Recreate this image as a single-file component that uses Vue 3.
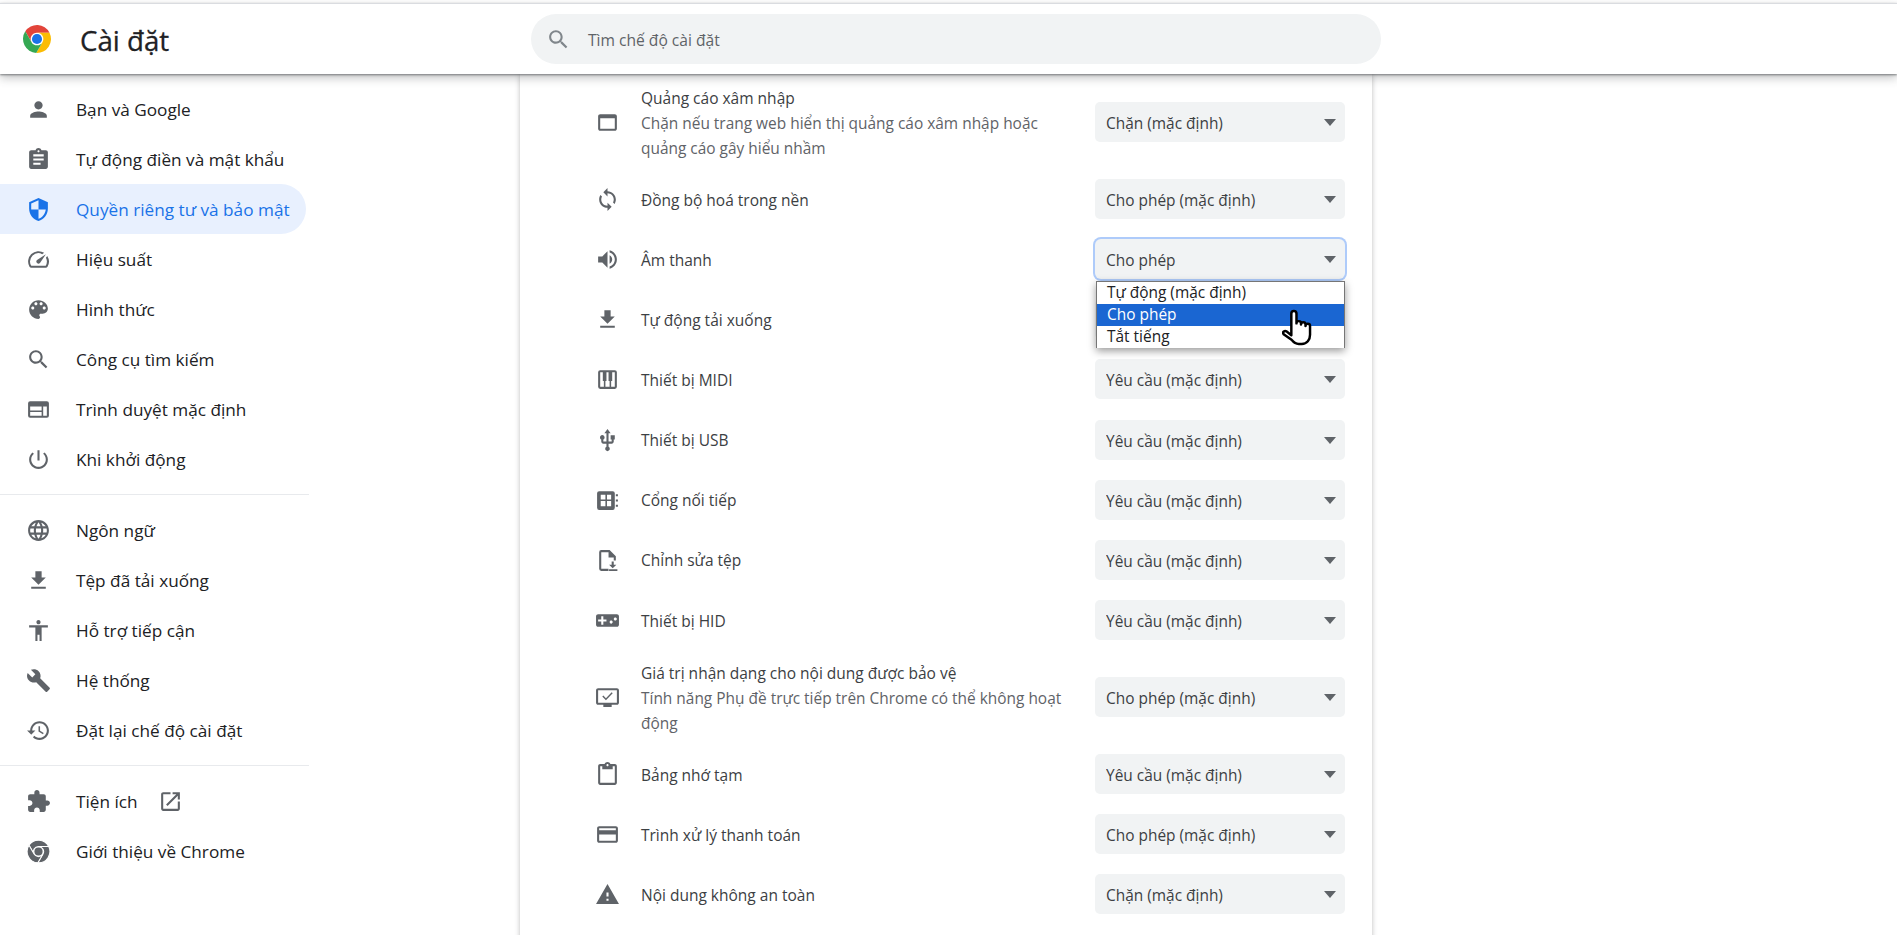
<template>
  <div class="page">
    <header class="topbar">
      <div class="brand">
        <svg class="logo" viewBox="2 2 20 20">
          <path v-for="w in chromeWedges" :key="w.d" :d="w.d" :fill="w.color" />
          <circle cx="12" cy="12" r="3.6" fill="#1a73e8" />
        </svg>
        <h1 class="title">Cài đặt</h1>
      </div>
      <div class="search">
        <svg class="search-icon" viewBox="0 0 24 24"><path :d="icons.search" /></svg>
        <span class="search-text">Tìm chế độ cài đặt</span>
      </div>
    </header>

    <div class="body">
      <nav class="sidebar">
        <template v-for="(group, i) in nav" :key="i">
          <div v-if="i > 0" class="divider"></div>
          <a
            v-for="item in group"
            :key="item.label"
            class="nav-item"
            :class="{ active: item.active }"
          >
            <svg v-if="item.icon === 'chrome'" class="nav-icon mono" viewBox="1 1 22 22">
              <path v-for="w in chromeWedges" :key="w.d" :d="w.d" />
              <circle cx="12" cy="12" r="3.6" />
            </svg>
            <svg v-else class="nav-icon" viewBox="0 0 24 24"><path :d="icons[item.icon]" /></svg>
            <span>{{ item.label }}</span>
            <svg v-if="item.external" class="ext-icon" viewBox="0 0 24 24"><path :d="icons.open" /></svg>
          </a>
        </template>
      </nav>

      <main class="card">
        <div v-for="(row, i) in rows" :key="i" class="row" :class="{ tall: row.desc }">
          <svg v-if="row.icon" class="row-icon" viewBox="0 0 24 24"><path :d="icons[row.icon]" fill-rule="evenodd" /></svg>
          <div class="row-text">
            <div class="row-label">{{ row.label }}</div>
            <div v-if="row.desc" class="row-desc">{{ row.desc }}</div>
          </div>
          <div class="select-wrap">
            <select class="select" :class="{ focused: row.open }" :value="row.value">
              <option>{{ row.value }}</option>
            </select>
            <i class="arrow"></i>
            <div v-if="row.open" class="popup">
              <div v-for="opt in soundOptions" :key="opt" class="popup-item" :class="{ picked: opt === row.value }">{{ opt }}</div>
              <svg class="hand" viewBox="0 0 30 36">
                <path d="M9 21V4.5a2.5 2.5 0 0 1 5 0V14a2.2 2.2 0 0 1 4.4 0v1a2.2 2.2 0 0 1 4.4 0v1.5a2.2 2.2 0 0 1 4.4 0V25c0 5-3 9-8 9h-3c-3 0-5-1.5-7-4L1.500 24.500c-1.500-2 1-4 3-2.500l4.500 3.500z" />
              </svg>
            </div>
          </div>
        </div>
      </main>
    </div>
  </div>
</template>

<script setup>
const icons = {
  search: "M15.5 14h-.79l-.28-.27C15.41 12.59 16 11.11 16 9.5 16 5.91 13.09 3 9.5 3S3 5.91 3 9.5 5.91 16 9.5 16c1.61 0 3.09-.59 4.23-1.57l.27.28v.79l5 4.99L20.49 19l-4.99-5zm-6 0C7.01 14 5 11.99 5 9.5S7.01 5 9.5 5 14 7.01 14 9.5 11.99 14 9.5 14z",
  person: "M12 12c2.21 0 4-1.79 4-4s-1.79-4-4-4-4 1.79-4 4 1.79 4 4 4zm0 2c-2.67 0-8 1.34-8 4v2h16v-2c0-2.66-5.33-4-8-4z",
  assignment: "M19 3h-4.18C14.4 1.84 13.3 1 12 1c-1.3 0-2.4.84-2.82 2H5c-1.1 0-2 .9-2 2v14c0 1.1.9 2 2 2h14c1.1 0 2-.9 2-2V5c0-1.1-.9-2-2-2zm-7 0c.55 0 1 .45 1 1s-.45 1-1 1-1-.45-1-1 .45-1 1-1zm2 14H7v-2h7v2zm3-4H7v-2h10v2zm0-4H7V7h10v2z",
  shield: "M12 1L3 5v6c0 5.55 3.84 10.74 9 12 5.16-1.26 9-6.45 9-12V5l-9-4zm0 10.99h7c-.53 4.12-3.28 7.79-7 8.94V12H5V6.3l7-3.11v8.8z",
  speed: "M20.38 8.57l-1.23 1.85a8 8 0 0 1-.22 7.58H5.07A8 8 0 0 1 15.58 6.85l1.85-1.23A10 10 0 0 0 3.35 19a2 2 0 0 0 1.72 1h13.85a2 2 0 0 0 1.74-1 10 10 0 0 0-.27-10.44zm-9.79 6.84a2 2 0 0 0 2.83 0l5.66-8.49-8.49 5.66a2 2 0 0 0 0 2.83z",
  palette: "M12 3c-4.97 0-9 4.03-9 9s4.03 9 9 9c.83 0 1.5-.67 1.5-1.5 0-.39-.15-.74-.39-1.01-.23-.26-.38-.61-.38-.99 0-.83.67-1.5 1.5-1.5H16c2.76 0 5-2.24 5-5 0-4.42-4.03-8-9-8zm-5.5 9c-.83 0-1.5-.67-1.5-1.5S5.67 9 6.5 9 8 9.67 8 10.5 7.33 12 6.5 12zm3-4C8.67 8 8 7.33 8 6.5S8.67 5 9.5 5s1.5.67 1.5 1.5S10.33 8 9.5 8zm5 0c-.83 0-1.5-.67-1.5-1.5S13.67 5 14.5 5s1.5.67 1.5 1.5S15.33 8 14.5 8zm3 4c-.83 0-1.5-.67-1.5-1.5S16.67 9 17.5 9s1.5.67 1.5 1.5-.67 1.5-1.5 1.5z",
  web: "M20 4H4a2 2 0 0 0-2 2v12a2 2 0 0 0 2 2h16a2 2 0 0 0 2-2V6a2 2 0 0 0-2-2zM4 9h11v4H4zm0 5.5h11V18H4zM16.5 9H20v9h-3.5z",
  power: "M13 3h-2v10h2V3zm4.83 2.17l-1.42 1.42C17.99 7.86 19 9.81 19 12c0 3.87-3.13 7-7 7s-7-3.13-7-7c0-2.19 1.01-4.14 2.58-5.42L6.17 5.17C4.23 6.82 3 9.26 3 12c0 4.97 4.03 9 9 9s9-4.03 9-9c0-2.74-1.23-5.18-3.17-6.83z",
  language: "M11.99 2C6.47 2 2 6.48 2 12s4.47 10 9.99 10C17.52 22 22 17.52 22 12S17.52 2 11.99 2zm6.93 6h-2.95c-.32-1.25-.78-2.45-1.38-3.56 1.84.63 3.37 1.91 4.33 3.56zM12 4.04c.83 1.2 1.48 2.53 1.91 3.96h-3.82c.43-1.43 1.08-2.76 1.91-3.96zM4.26 14C4.1 13.36 4 12.69 4 12s.1-1.36.26-2h3.38c-.08.66-.14 1.32-.14 2 0 .68.06 1.34.14 2H4.26zm.82 2h2.95c.32 1.25.78 2.45 1.38 3.56-1.84-.63-3.37-1.9-4.33-3.56zm2.95-8H5.08c.96-1.66 2.49-2.93 4.33-3.56C8.81 5.55 8.35 6.75 8.03 8zM12 19.96c-.83-1.2-1.48-2.53-1.91-3.96h3.82c-.43 1.43-1.08 2.76-1.91 3.96zM14.34 14H9.66c-.09-.66-.16-1.32-.16-2 0-.68.07-1.35.16-2h4.68c.09.65.16 1.32.16 2 0 .68-.07 1.34-.16 2zm.25 5.56c.6-1.11 1.06-2.31 1.38-3.56h2.95c-.96 1.65-2.49 2.93-4.33 3.56zM16.36 14c.08-.66.14-1.32.14-2 0-.68-.06-1.34-.14-2h3.38c.16.64.26 1.31.26 2s-.1 1.36-.26 2h-3.38z",
  download: "M19 9h-4V3H9v6H5l7 7 7-7zM5 18v2h14v-2H5z",
  accessibility: "M12 2c1.1 0 2 .9 2 2s-.9 2-2 2-2-.9-2-2 .9-2 2-2zm9 7h-6v13h-2v-6h-2v6H9V9H3V7h18v2z",
  build: "M22.7 19l-9.1-9.1c.9-2.3.4-5-1.5-6.9-2-2-5-2.4-7.4-1.3L9 6 6 9 1.6 4.7C.4 7.1.9 10.1 2.9 12.1c1.9 1.9 4.6 2.4 6.9 1.5l9.1 9.1c.4.4 1 .4 1.4 0l2.3-2.3c.5-.4.5-1.1.1-1.4z",
  restore: "M13 3c-4.97 0-9 4.03-9 9H1l3.89 3.89.07.14L9 12H6c0-3.87 3.13-7 7-7s7 3.13 7 7-3.13 7-7 7c-1.93 0-3.68-.79-4.94-2.06l-1.42 1.42C8.27 19.99 10.51 21 13 21c4.97 0 9-4.03 9-9s-4.03-9-9-9zm-1 5v5l4.28 2.54.72-1.21-3.5-2.08V8H12z",
  extension: "M20.5 11H19V7c0-1.1-.9-2-2-2h-4V3.5C13 2.12 11.88 1 10.5 1S8 2.12 8 3.5V5H4c-1.1 0-1.99.9-1.99 2v3.8H3.5c1.49 0 2.7 1.21 2.7 2.7s-1.21 2.7-2.7 2.7H2V20c0 1.1.9 2 2 2h3.8v-1.5c0-1.49 1.21-2.7 2.7-2.7 1.49 0 2.7 1.21 2.7 2.7V22H17c1.1 0 2-.9 2-2v-4h1.5c1.38 0 2.5-1.12 2.5-2.5S21.88 11 20.5 11z",
  open: "M19 19H5V5h7V3H5c-1.11 0-2 .9-2 2v14c0 1.1.89 2 2 2h14c1.1 0 2-.9 2-2v-7h-2v7zM14 3v2h3.59l-9.83 9.83 1.41 1.41L19 6.41V10h2V3h-7z",
  asset: "M19 4H5c-1.11 0-2 .9-2 2v12c0 1.1.89 2 2 2h14c1.1 0 2-.9 2-2V6c0-1.1-.9-2-2-2zm0 14H5V8h14v10z",
  sync: "M12 4V1L8 5l4 4V6c3.31 0 6 2.69 6 6 0 1.01-.25 1.97-.7 2.8l1.46 1.46C19.54 15.03 20 13.57 20 12c0-4.42-3.58-8-8-8zm0 14c-3.31 0-6-2.69-6-6 0-1.01.25-1.97.7-2.8L5.24 7.74C4.46 8.97 4 10.43 4 12c0 4.42 3.58 8 8 8v3l4-4-4-4v3z",
  volume: "M3 9v6h4l5 5V4L7 9H3zm13.5 3c0-1.77-1.02-3.29-2.5-4.03v8.05c1.48-.73 2.5-2.25 2.5-4.02zM14 3.23v2.06c2.89.86 5 3.54 5 6.71s-2.11 5.85-5 6.71v2.06c4.01-.91 7-4.49 7-8.77s-2.99-7.86-7-8.77z",
  piano: "M19 3H5a2 2 0 0 0-2 2v14a2 2 0 0 0 2 2h14a2 2 0 0 0 2-2V5a2 2 0 0 0-2-2zM5 5h2.5v8.5h1V19H5zm5 14v-5.5h1V5h2v8.5h1V19zm5.5 0v-5.5h1V5H19v14z",
  usb: "M15 7v4h1v2h-3V5h2l-3-4-3 4h2v8H8v-2.07c.7-.37 1.2-1.08 1.2-1.93 0-1.21-.99-2.2-2.2-2.2-1.21 0-2.2.99-2.2 2.2 0 .85.5 1.56 1.2 1.93V13c0 1.11.89 2 2 2h3v3.05c-.71.37-1.2 1.1-1.2 1.95 0 1.22.99 2.2 2.2 2.2 1.21 0 2.2-.98 2.2-2.2 0-.85-.49-1.58-1.2-1.95V15h3c1.11 0 2-.89 2-2v-2h1V7h-4z",
  serial: "M4 3h13a2 2 0 0 1 2 2v14a2 2 0 0 1-2 2H4a2 2 0 0 1-2-2V5a2 2 0 0 1 2-2zm1.500 3.500v4.500h4.500V6.500zm6 0v4.500h4V6.500zm-6 6v5h4.500v-5zm6 0v5h4v-5zM20 6h2v2h-2zm0 5h2v2h-2zm0 5h2v2h-2z",
  file: "M14 2H6a2 2 0 0 0-2 2v16a2 2 0 0 0 2 2h7v-2H6V4h7v5h5v3h2V8zM16 13h2v3h2.5L17 19.5 13.5 16H16zM13.5 20.5h8V22h-8z",
  gamepad: "M21 6H3c-1.1 0-2 .9-2 2v8c0 1.1.9 2 2 2h18c1.1 0 2-.9 2-2V8c0-1.1-.9-2-2-2zm-10 7H8v3H6v-3H3v-2h3V8h2v3h3v2zm4.5 2c-.83 0-1.5-.67-1.5-1.5s.67-1.5 1.5-1.5 1.5.67 1.5 1.5-.67 1.5-1.5 1.5zm4-3c-.83 0-1.5-.67-1.5-1.5S18.67 9 19.5 9s1.5.67 1.5 1.5-.67 1.5-1.5 1.5z",
  protected: "M21 3H3c-1.1 0-2 .9-2 2v12c0 1.1.9 2 2 2h5v2h8v-2h5c1.1 0 2-.9 2-2V5c0-1.1-.9-2-2-2zM3 5h18v12H3zM17 8l-1-1-5.5 5.6L8 10.1l-1 1 3.5 3.5z",
  clipboard: "M19 2h-4.18C14.4.84 13.3 0 12 0c-1.3 0-2.4.84-2.82 2H5c-1.1 0-2 .9-2 2v16c0 1.1.9 2 2 2h14c1.1 0 2-.9 2-2V4c0-1.1-.9-2-2-2zm-7 0c.55 0 1 .45 1 1s-.45 1-1 1-1-.45-1-1 .45-1 1-1zm7 18H5V4h2v3h10V4h2v16z",
  payment: "M20 4H4c-1.11 0-1.99.89-1.99 2L2 18c0 1.11.89 2 2 2h16c1.11 0 2-.89 2-2V6c0-1.11-.89-2-2-2zm0 14H4v-6h16v6zm0-10H4V6h16v2z",
  warning: "M1 21h22L12 2 1 21zm12-3h-2v-2h2v2zm0-4h-2v-4h2v4z",
};

const chromeWedges = [
  { color: "#e2443a", d: "M3.64 6.52A10 10 0 0 1 20.93 7.5L12 7.5A4.5 4.5 0 0 0 8.1 14.25Z" },
  { color: "#fbbc04", d: "M20.93 7.5A10 10 0 0 1 11.43 21.98L15.9 14.25A4.5 4.5 0 0 0 12 7.5Z" },
  { color: "#34a853", d: "M11.43 21.98A10 10 0 0 1 3.64 6.52L8.1 14.25A4.5 4.5 0 0 0 15.9 14.25Z" },
];

const nav = [
  [
    { label: "Bạn và Google", icon: "person" },
    { label: "Tự động điền và mật khẩu", icon: "assignment" },
    { label: "Quyền riêng tư và bảo mật", icon: "shield", active: true },
    { label: "Hiệu suất", icon: "speed" },
    { label: "Hình thức", icon: "palette" },
    { label: "Công cụ tìm kiếm", icon: "search" },
    { label: "Trình duyệt mặc định", icon: "web" },
    { label: "Khi khởi động", icon: "power" },
  ],
  [
    { label: "Ngôn ngữ", icon: "language" },
    { label: "Tệp đã tải xuống", icon: "download" },
    { label: "Hỗ trợ tiếp cận", icon: "accessibility" },
    { label: "Hệ thống", icon: "build" },
    { label: "Đặt lại chế độ cài đặt", icon: "restore" },
  ],
  [
    { label: "Tiện ích", icon: "extension", external: true },
    { label: "Giới thiệu về Chrome", icon: "chrome" },
  ],
];

const soundOptions = ["Tự động (mặc định)", "Cho phép", "Tắt tiếng"];

const rows = [
  { label: "Quảng cáo xâm nhập", desc: "Chặn nếu trang web hiển thị quảng cáo xâm nhập hoặc quảng cáo gây hiểu nhầm", icon: "asset", value: "Chặn (mặc định)" },
  { label: "Đồng bộ hoá trong nền", icon: "sync", value: "Cho phép (mặc định)" },
  { label: "Âm thanh", icon: "volume", value: "Cho phép", open: true },
  { label: "Tự động tải xuống", icon: "download", value: "Yêu cầu (mặc định)" },
  { label: "Thiết bị MIDI", icon: "piano", value: "Yêu cầu (mặc định)" },
  { label: "Thiết bị USB", icon: "usb", value: "Yêu cầu (mặc định)" },
  { label: "Cổng nối tiếp", icon: "serial", value: "Yêu cầu (mặc định)" },
  { label: "Chỉnh sửa tệp", icon: "file", value: "Yêu cầu (mặc định)" },
  { label: "Thiết bị HID", icon: "gamepad", value: "Yêu cầu (mặc định)" },
  { label: "Giá trị nhận dạng cho nội dung được bảo vệ", desc: "Tính năng Phụ đề trực tiếp trên Chrome có thể không hoạt động", icon: "protected", value: "Cho phép (mặc định)" },
  { label: "Bảng nhớ tạm", icon: "clipboard", value: "Yêu cầu (mặc định)" },
  { label: "Trình xử lý thanh toán", icon: "payment", value: "Cho phép (mặc định)" },
  { label: "Nội dung không an toàn", icon: "warning", value: "Chặn (mặc định)" },
  { label: "", value: "" },
];
</script>

<style>
html,
body {
  margin: 0;
  height: 935px;
  overflow: hidden;
  background: #fff;
}
</style>

<style scoped>
.page {
  height: 935px;
  overflow: hidden;
  font-family: "Open Sans", "Noto Sans", sans-serif;
  font-size: 15.6px;
  color: #202124;
}
.topbar {
  position: relative;
  z-index: 2;
  display: flex;
  align-items: center;
  box-sizing: border-box;
  height: 71px;
  margin-top: 3px;
  border-top: 1px solid #dadce0;
  background: #fff;
  box-shadow: 0 1px 2px rgba(60, 64, 67, 0.6), 0 4px 9px rgba(60, 64, 67, 0.3);
}
.brand {
  display: flex;
  align-items: center;
  width: 531px;
  padding-left: 23px;
  box-sizing: border-box;
}
.logo {
  width: 28px;
  height: 28px;
}
.title {
  margin: 2px 0 0 29px;
  font-size: 27.7px;
  font-weight: 500;
  color: #202124;
  -webkit-text-stroke: 0.3px #202124;
}
.search {
  display: flex;
  align-items: center;
  width: 850px;
  height: 50px;
  border-radius: 25px;
  background: #f1f3f4;
  color: #5f6368;
  font-size: 15.6px;
}
.search-icon {
  width: 25px;
  height: 25px;
  margin-left: 15px;
  margin-right: 17px;
  fill: #80868b;
}
.search-text {
  padding-top: 2px;
}
.body {
  display: flex;
  align-items: flex-start;
}
.sidebar {
  flex: none;
  width: 309px;
  padding-top: 10px;
  font-size: 17.2px;
}
.nav-item {
  display: flex;
  align-items: center;
  height: 50px;
  width: 306px;
  box-sizing: border-box;
  padding-left: 26px;
  border-radius: 0 25px 25px 0;
}
.nav-item.active {
  background: #e8f0fe;
  color: #1a73e8;
}
.nav-icon {
  flex: none;
  width: 25px;
  height: 25px;
  margin-right: 25px;
  fill: #5f6368;
}
.nav-icon.mono path {
  stroke: #fff;
  stroke-width: 0.9;
}
.nav-item.active .nav-icon {
  fill: #1a73e8;
}
.ext-icon {
  width: 25px;
  height: 25px;
  margin-left: 20px;
  fill: #5f6368;
}
.divider {
  height: 1px;
  margin: 10px 0;
  background: #e8eaed;
}
.card {
  flex: none;
  box-sizing: border-box;
  width: 852px;
  margin-left: 211px;
  padding: 1px 27px 0 75px;
  background: #fff;
  box-shadow: 0 0 5px rgba(60, 64, 67, 0.35);
}
.row {
  display: flex;
  align-items: center;
  min-height: 60.15px;
}
.row.tall {
  padding: 8.5px 0;
}
.row-icon {
  flex: none;
  width: 25px;
  height: 25px;
  margin-top: 1px;
  margin-right: 21px;
  fill: #5f6368;
}
.row-text {
  flex: 1;
  min-width: 0;
  padding-top: 2px;
  padding-right: 23px;
  line-height: 25px;
}
.row-label {
  color: #3c4043;
  font-size: 15.5px;
}
.row-desc {
  color: #5f6368;
  font-size: 15.45px;
}
.select-wrap {
  position: relative;
  flex: none;
  width: 250px;
  height: 40px;
  font-size: 15.45px;
}
.select {
  display: block;
  width: 100%;
  height: 100%;
  box-sizing: border-box;
  padding: 2px 10px 0 11px;
  border: none;
  border-radius: 5px;
  outline: none;
  appearance: none;
  background: #f1f3f4;
  color: #3c4043;
  font: inherit;
}
.select.focused {
  border-radius: 6px;
  box-shadow: 0 0 0 2px #aecbfa;
}
.arrow {
  position: absolute;
  top: 17px;
  right: 9px;
  border-left: 6.5px solid transparent;
  border-right: 6.5px solid transparent;
  border-top: 7px solid #5f6368;
}
.popup {
  position: absolute;
  z-index: 1;
  top: 42px;
  left: 1px;
  width: 249px;
  box-sizing: border-box;
  border: 1px solid #767676;
  border-bottom: none;
  background: #fff;
  box-shadow: 0 3px 8px rgba(0, 0, 0, 0.4);
  color: #202124;
}
.popup-item {
  height: 22px;
  padding-left: 10px;
  line-height: 20px;
}
.popup-item.picked {
  background: #1a66d2;
  color: #fff;
}
.hand {
  position: absolute;
  top: 27px;
  left: 185px;
  width: 31px;
  height: 37px;
  fill: #fff;
  stroke: #000;
  stroke-width: 2.4;
  stroke-linejoin: round;
}
</style>
